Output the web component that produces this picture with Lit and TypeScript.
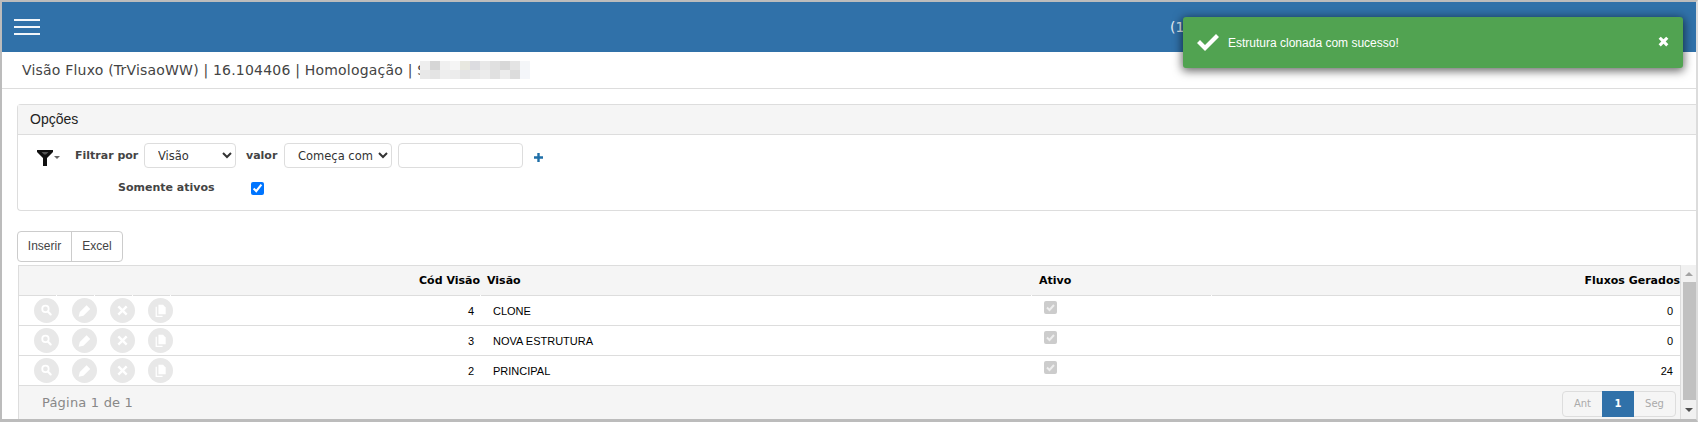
import { LitElement, html, css, svg } from "lit";
import { customElement } from "lit/decorators.js";

const ROWS = [
  { code: "4", name: "CLONE", flows: "0" },
  { code: "3", name: "NOVA ESTRUTURA", flows: "0" },
  { code: "2", name: "PRINCIPAL", flows: "24" },
];

const ICONS = [
  svg`<circle cx="11" cy="10.500" r="3.100" fill="none" stroke="#fff" stroke-width="1.700"/><path d="M13.300 13l2.700 2.800" stroke="#fff" stroke-width="2.100" stroke-linecap="round"/>`,
  svg`<path d="M7.500 13.500 14 7l3.500 3.500-6.500 6.500-4.600 1.100z" fill="#fff"/>`,
  svg`<path d="M8 8l8 8M16 8l-8 8" stroke="#fff" stroke-width="2.300"/>`,
  svg`<path d="M10 6.500h4.500l2.500 2.500v6.500h-7z" fill="#fff"/><path d="M8.500 8.500v8.500H14v1.200H7.300V8.500z" fill="#fff"/>`,
];

const MOSAIC = ["#eeeeee","#d6d6d6","#f0f0f0","#f5f5f5","#e8e8e0","#dcdce0","#e8e8e8","#e0e0e0","#d8d8d8","#e4e4e4","#f4f6f8"];
const MOSAIC2 = ["#e8e8e8","#e4e4e4","#eeeeee","#ececec","#e4e4e4","#e8e8e8","#ececec","#e0e0e0","#ececec","#dcdcdc","#f4f6fa"];

@customElement("app-root")
export class AppRoot extends LitElement {
  static styles = css`
    :host { display: block; width: 1698px; height: 422px; overflow: hidden; background: #fff; }
    * { box-sizing: border-box; }
    .frame { position: relative; height: 422px; border-style: solid; border-color: #bcbcbc #dcdcdc #bcbcbc #bcbcbc; border-width: 2px 2px 3px 2px; display: flex; flex-direction: column; font-family: "DejaVu Sans", Verdana, sans-serif; color: #333; background: #fff; }
    .top { height: 50px; flex: none; background: #3071a9; display: flex; align-items: center; justify-content: flex-end; padding: 0 0 0 12px; }
    .burger { width: 26px; height: 16px; margin-right: auto; display: flex; flex-direction: column; justify-content: space-between; }
    .burger i { display: block; height: 2px; background: #f2f6fa; }
    .count { color: #e6eef5; font-size: 14px; width: 30px; margin-right: 496px; margin-top: -1px; }
    .title { height: 37px; flex: none; border-bottom: 1px solid #ddd; display: flex; align-items: center; padding: 0 0 1px 20px; font-size: 14px; letter-spacing: .2px; color: #444; white-space: pre; }
    .blur { display: grid; grid-template-columns: repeat(11, 10px); grid-auto-rows: 9px; margin-left: -6px; }
    .panel { flex: none; height: 107px; margin: 15px 0 0 15px; border: 1px solid #ddd; border-right: 0; border-radius: 4px 0 0 4px; }
    .panel-h { height: 30px; background: #f5f5f5; border-bottom: 1px solid #ddd; padding: 0 0 2px 12px; display: flex; align-items: center; font: 14px "Liberation Sans", Arial, sans-serif; color: #222; }
    .panel-b { padding: 8px 0 0 19px; }
    .f1 { display: flex; align-items: center; height: 25px; font-size: 11px; font-weight: 700; color: #444; }
    .funnel { width: 23px; height: 17px; margin-right: 15px; margin-top: 3px; flex: none; }
    .lb1 { width: 69px; flex: none; }
    .lb2 { width: 38px; flex: none; }
    select { appearance: auto; height: 25px; border: 1px solid #ddd; border-radius: 4px; background: #fff; color: #333; font: 11.500px "DejaVu Sans", Verdana, sans-serif; padding: 0 0 0 9px; flex: none; }
    .s1 { width: 92px; margin-right: 10px; }
    .s2 { width: 108px; margin-right: 6px; }
    .txt { width: 125px; height: 25px; border: 1px solid #ddd; border-radius: 4px; background: #fff; flex: none; }
    .plus { width: 9px; height: 9px; margin-left: 11px; margin-top: 3px; }
    .f2 { display: flex; align-items: center; height: 22px; margin-top: 9px; padding-left: 81px; font-size: 11px; font-weight: 700; color: #444; }
    .f2 span { width: 133px; margin-top: -2px; }
    .f2 input { width: 13px; height: 13px; margin: 0; accent-color: #0075ff; }
    .btns { flex: none; display: flex; margin: 20px 0 0 15px; width: 106px; height: 31px; border: 1px solid #ccc; border-radius: 4px; font: 12px "Liberation Sans", Arial, sans-serif; color: #444; }
    .btns span { display: flex; align-items: center; justify-content: center; padding-bottom: 2px; }
    .btns .a { width: 54px; border-right: 1px solid #ccc; }
    .btns .b { flex: 1; }
    .main { flex: 1; display: flex; min-height: 0; margin-top: 3px; padding-left: 16px; }
    .tbl { flex: 1; border: solid #ddd; border-width: 1px 1px 0 1px; display: flex; flex-direction: column; min-width: 0; }
    .grid { display: grid; grid-template-columns: 38px 38px 38px 38px 310px 551px 180px 1fr; }
    .hd { height: 30px; background: linear-gradient(#f5f5f5 29px, #fff 29px); }
    .hd > div { display: flex; align-items: center; height: 30px; margin-right: 1px; border-bottom: 1px solid #ddd; font-size: 11px; font-weight: 700; color: #000; }
    .hd > div:last-child { margin-right: 0; }
    .r { justify-content: flex-end; }
    .hd .name { padding-left: 6px; }
    .hd .act { padding-left: 7px; }
    .hd .flow { padding-right: 0; }
    .row { height: 30px; border-bottom: 1px solid #ddd; font: 11px "Liberation Sans", Arial, sans-serif; color: #000; }
    .row > div { display: flex; align-items: center; height: 29px; }
    .row .ic { padding-left: 15px; }
    .ic svg { width: 25px; height: 25px; flex: none; margin-top: -1px; }
    .row .code { padding-right: 7px; }
    .row .name { padding-left: 12px; }
    .row .act { padding-left: 12px; padding-bottom: 7px; }
    .row .flow { padding-right: 7px; }
    .dis { width: 13px; height: 13px; border-radius: 2px; background: #ccc; display: block; }
    .foot { flex: 1; background: #f5f5f5; display: flex; align-items: center; justify-content: space-between; padding: 0 4px 0 23px; font-size: 13px; letter-spacing: .2px; color: #888; }
    .pager { display: flex; height: 26px; border: 1px solid #ddd; border-radius: 4px; font-size: 10px; color: #aaa; margin-top: 2px; letter-spacing: 0; }
    .pager span { display: flex; align-items: center; justify-content: center; }
    .pager .on { width: 32px; background: #3071a9; color: #fff; font-weight: 700; margin: -1px 0; }
    .pager .ant { width: 39px; } .pager .seg { width: 41px; }
    .sb { flex: none; width: 15px; background: #f1f1f1; display: flex; flex-direction: column; }
    .sb .bt { height: 17px; display: flex; align-items: center; justify-content: center; }
    .sb .bt.dn { height: 19px; }
    .sb .thumb { flex: 1; background: #c1c1c1; margin: 0 0 0 2px; }
    .tri { width: 0; height: 0; border-left: 4px solid transparent; border-right: 4px solid transparent; }
    .tri.u { border-bottom: 4px solid #a3a3a3; }
    .tri.d { border-top: 4px solid #505050; }
    .toast { position: absolute; left: 1181px; top: 15px; width: 500px; height: 51px; background: #51a351; border-radius: 3px; box-shadow: 0 2px 10px 1px rgba(0,0,0,.6); color: #fff; display: flex; align-items: center; padding: 0 13px 0 14px; font: 12px "Liberation Sans", Arial, sans-serif; }
    .toast .ok { width: 22px; height: 17px; margin-right: 9px; flex: none; }
    .toast .msg { flex: 1; }
    .toast .x { width: 13px; height: 13px; margin-top: -3px; }
  `;

  render() {
    return html`<div class="frame">
      <div class="top">
        <div class="burger"><i></i><i></i><i></i></div>
        <div class="count">(1)</div>
      </div>
      <div class="title">Visão Fluxo (TrVisaoWW) | 16.104406 | Homologação | S<div class="blur">
        ${[...MOSAIC, ...MOSAIC2].map((c) => html`<i style="background:${c}"></i>`)}
      </div></div>
      <div class="panel">
        <div class="panel-h">Opções</div>
        <div class="panel-b">
          <div class="f1">
            <svg class="funnel" viewBox="0 0 23 17">
              <path d="M0 1h16v2l-6 6v8H6V9L0 3z" fill="#111"/><path d="M4.500 3h7L9 5.500H7z" fill="#555"/>
              <path d="M17 7h6l-3 3z" fill="#666"/>
            </svg>
            <span class="lb1">Filtrar por</span>
            <select class="s1"><option>Visão</option></select>
            <span class="lb2">valor</span>
            <select class="s2"><option>Começa com</option></select>
            <div class="txt"></div>
            <svg class="plus" viewBox="0 0 9 9"><path d="M3.300 0h2.400v3.300H9v2.400H5.700V9H3.300V5.700H0V3.300h3.300z" fill="#1f6fa8"/></svg>
          </div>
          <div class="f2"><span>Somente ativos</span><input type="checkbox" checked /></div>
        </div>
      </div>
      <div class="btns"><span class="a">Inserir</span><span class="b">Excel</span></div>
      <div class="main">
        <div class="tbl">
          <div class="grid hd">
            <div></div><div></div><div></div><div></div>
            <div class="code r">Cód Visão</div>
            <div class="name">Visão</div>
            <div class="act">Ativo</div>
            <div class="flow r">Fluxos Gerados</div>
          </div>
          ${ROWS.map((r) => html`<div class="grid row">
            ${ICONS.map((p) => html`<div class="ic"><svg viewBox="0 0 24 24"><circle cx="12" cy="12" r="12" fill="#e8e8e8"/>${p}</svg></div>`)}
            <div class="code r">${r.code}</div>
            <div class="name">${r.name}</div>
            <div class="act"><svg class="dis" viewBox="0 0 13 13"><path d="M3 6.500l2.500 2.500L10 4" fill="none" stroke="#eee" stroke-width="2"/></svg></div>
            <div class="flow r">${r.flows}</div>
          </div>`)}
          <div class="foot">
            <span>Página 1 de 1</span>
            <div class="pager"><span class="ant">Ant</span><span class="on">1</span><span class="seg">Seg</span></div>
          </div>
        </div>
        <div class="sb">
          <div class="bt"><i class="tri u"></i></div>
          <div class="thumb"></div>
          <div class="bt dn"><i class="tri d"></i></div>
        </div>
      </div>
      <div class="toast">
        <svg class="ok" viewBox="0 0 22 17"><path d="M0 9l3-3 5 5L19 0l3 3L8 17z" fill="#fff"/></svg>
        <span class="msg">Estrutura clonada com sucesso!</span>
        <svg class="x" viewBox="0 0 12 12"><path d="M1.500 3.500l2-2L6 4l2.500-2.500 2 2L8 6l2.500 2.500-2 2L6 8l-2.500 2.500-2-2L4 6z" fill="#fff"/></svg>
      </div>
    </div>`;
  }
}
